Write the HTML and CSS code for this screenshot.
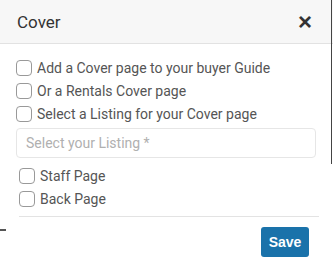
FILE: index.html
```html
<!DOCTYPE html>
<html lang="en">
<head>
    <meta charset="UTF-8">
    <meta name="viewport" content="width=device-width, initial-scale=1.0">
    <title>Cover</title>
    <link rel="stylesheet" href="styles.css">
</head>
<body>
    <div class="modal">
        <header class="modal-header">
            <h2>Cover</h2>
            <button class="close">&times;</button>
        </header>

        <div class="modal-body">
            <label class="check"><input type="checkbox"> Add a Cover page to your buyer Guide</label>
            <label class="check"><input type="checkbox"> Or a Rentals Cover page</label>
            <label class="check"><input type="checkbox"> Select a Listing for your Cover page</label>
            <input class="listing" type="text" placeholder="Select your Listing *">

            <div class="pages">
                <label class="check"><input type="checkbox"> Staff Page</label>
                <label class="check"><input type="checkbox"> Back Page</label>
            </div>
        </div>

        <footer class="modal-footer">
            <button class="button">Save</button>
        </footer>

        <!-- edges of the page behind the dialog -->
        <span class="edge"></span>
        <span class="dash"></span>
    </div>
</body>
</html>
```

FILE: styles.css
```css
body {
    font-family: Roboto, "Liberation Sans", sans-serif;
    margin: 0;
    padding: 0;
    background-color: #fff;
    color: #444;
}
.modal {
    position: relative;
    width: 333px;
    height: 271px;
}
.modal-header {
    display: flex;
    align-items: center;
    justify-content: space-between;
    height: 44px;
    padding: 0 17px;
    background-color: #f7f7f7;
    border-bottom: 1px solid #e2e2e2;
    box-sizing: border-box;
}
.modal-header h2 {
    margin: 0;
    font-size: 17px;
    font-weight: normal;
    color: #333;
}
.close {
    border: none;
    background: none;
    padding: 0;
    margin-right: 4px;
    font-family: Arial, "Liberation Sans", sans-serif;
    font-size: 24px;
    font-weight: bold;
    line-height: 1;
    color: #333;
}
.modal-body {
    padding: 12px 17px 0 16px;
}
.check {
    display: flex;
    align-items: center;
    height: 23px;
    font-size: 14px;
    color: #555;
}
.check input {
    appearance: none;
    width: 16px;
    height: 16px;
    margin: 0 5px 0 0;
    border: 1px solid #999;
    border-radius: 4px;
    background-color: #fff;
}
.listing {
    display: block;
    width: 300px;
    height: 30px;
    margin: 3px 0 6px;
    padding: 0 9px;
    box-sizing: border-box;
    border: 1px solid #e6e6e6;
    border-radius: 4px;
    font-family: inherit;
    font-size: 14px;
}
.listing::placeholder {
    color: #b0b0b0;
}
.pages {
    padding: 0 0 6px;
    margin: 0 -3px 0 3px;
    border-bottom: 1px solid #e3e3e3;
}
.modal-footer {
    display: flex;
    justify-content: flex-end;
    padding: 10px 24px 0 0;
}
.button {
    background-color: #1a72aa;
    color: #fff;
    width: 48px;
    height: 30px;
    border: none;
    border-radius: 3px;
    font-family: Arial, "Liberation Sans", sans-serif;
    font-size: 14px;
    font-weight: bold;
    cursor: pointer;
}
.edge {
    position: absolute;
    top: 0;
    right: 1px;
    width: 1px;
    height: 164px;
    background-color: #444;
}
.dash {
    position: absolute;
    left: 0;
    top: 229px;
    width: 6px;
    height: 2px;
    background-color: #555;
}
```
